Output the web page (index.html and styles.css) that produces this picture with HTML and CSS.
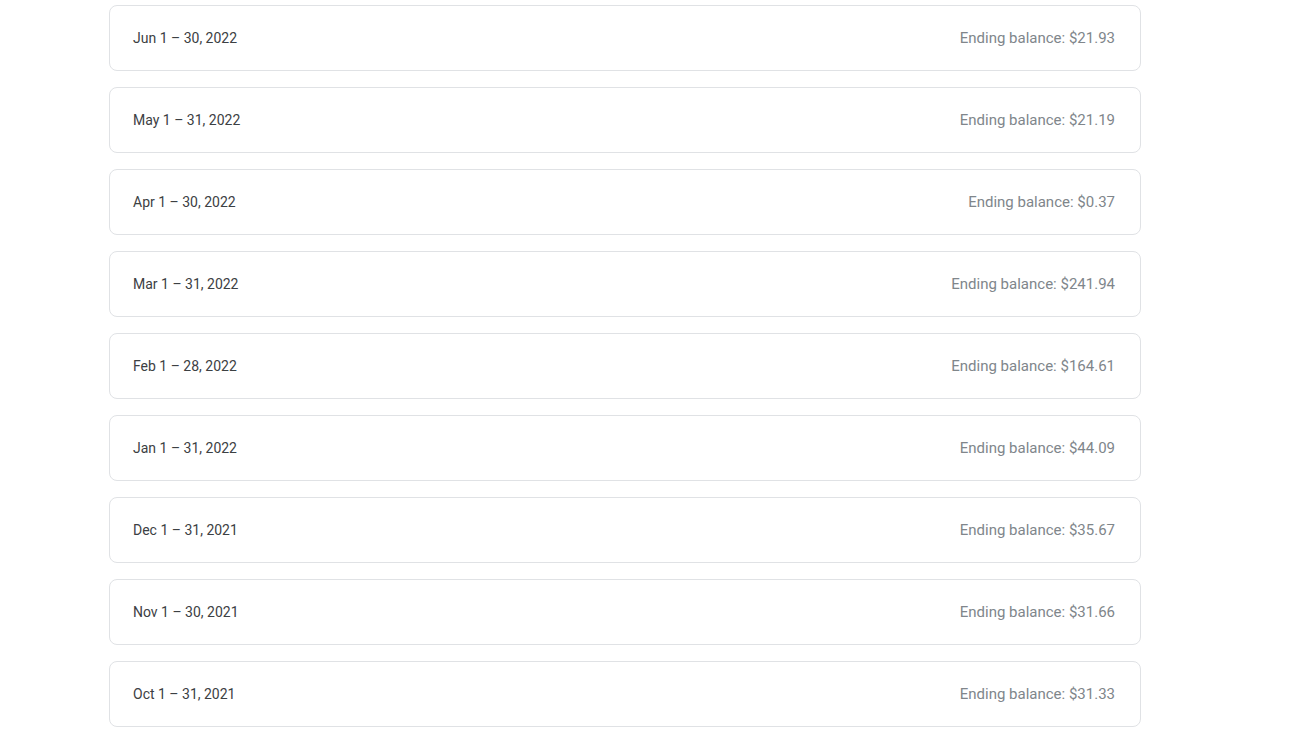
FILE: index.html
```html
<!DOCTYPE html>
<html lang="en">
<head>
<meta charset="utf-8">
<link rel="stylesheet" href="styles.css">
</head>
<body>
<div class="list">
  <div class="card"><span class="period">Jun 1 – 30, 2022</span><span class="balance">Ending balance: $21.93</span></div>
  <div class="card"><span class="period">May 1 – 31, 2022</span><span class="balance">Ending balance: $21.19</span></div>
  <div class="card"><span class="period">Apr 1 – 30, 2022</span><span class="balance">Ending balance: $0.37</span></div>
  <div class="card"><span class="period">Mar 1 – 31, 2022</span><span class="balance">Ending balance: $241.94</span></div>
  <div class="card"><span class="period">Feb 1 – 28, 2022</span><span class="balance">Ending balance: $164.61</span></div>
  <div class="card"><span class="period">Jan 1 – 31, 2022</span><span class="balance">Ending balance: $44.09</span></div>
  <div class="card"><span class="period">Dec 1 – 31, 2021</span><span class="balance">Ending balance: $35.67</span></div>
  <div class="card"><span class="period">Nov 1 – 30, 2021</span><span class="balance">Ending balance: $31.66</span></div>
  <div class="card"><span class="period">Oct 1 – 31, 2021</span><span class="balance">Ending balance: $31.33</span></div>
</div>
</body>
</html>
```
FILE: styles.css
```css
html, body {
  margin: 0;
  padding: 0;
  background: #ffffff;
}
body {
  font-family: Roboto, "Liberation Sans", sans-serif;
  overflow: hidden;
}
.list {
  display: flex;
  flex-direction: column;
  gap: 16px;
  width: 1032px;
  margin-left: 109px;
  padding-top: 5px;
}
.card {
  box-sizing: border-box;
  height: 66px;
  border: 1px solid #e0e2e5;
  border-radius: 8px;
  display: flex;
  align-items: center;
  justify-content: space-between;
  padding: 0 25px 0 23px;
}
.period {
  color: #3c4043;
  font-size: 14px;
}
.balance {
  color: #80868b;
  font-size: 15px;
}
```
